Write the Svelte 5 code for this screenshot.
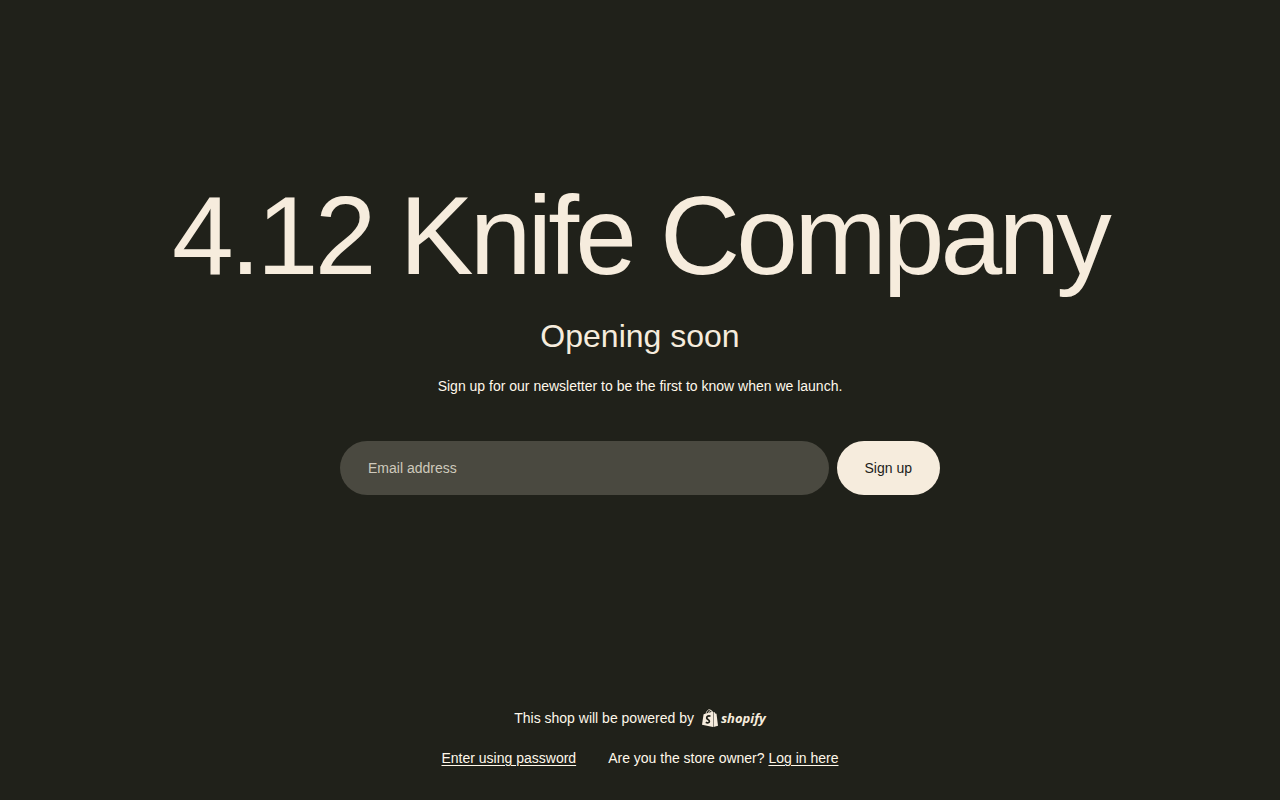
<script>
  let email = $state('');
</script>

<div class="page">
  <main>
    <h1>4.12 Knife Company</h1>
    <h2>Opening soon</h2>
    <p class="intro">Sign up for our newsletter to be the first to know when we launch.</p>
    <form onsubmit={(event) => event.preventDefault()}>
      <input type="email" aria-label="Email address" placeholder="Email address" bind:value={email} />
      <button type="submit">Sign up</button>
    </form>
  </main>

  <footer>
    <p class="powered">
      This shop will be powered by
      <a href="#shopify" class="brand" aria-label="Shopify">
        <svg width="16" height="18" viewBox="0 0 16 18" aria-hidden="true">
          <path fill="#f6ecdd" d="M1.6 5.2 11 2.6V18L0 15.8Z" />
          <path fill="#f6ecdd" d="m11.5 3 1.2.2.5 1.4 1.3.2L16 16.8 11.5 18Z" />
          <path fill="none" stroke="#f6ecdd" stroke-width=".8" d="M4 5C4.5 2.2 6 .6 7.3.6c1.3 0 2 1.2 2.2 3M6.4 4.5C6.7 2.6 7.7 1.4 8.8 1.4c.8 0 1.3.6 1.5 1.6" />
          <path fill="none" stroke="#20211a" stroke-width="1.7" d="M8.5 7.2C6.7 6.5 4.7 7.2 4.7 8.9c0 1.6 2.7 1.6 2.7 3.4 0 1.6-1.8 2.1-3.6.9" />
        </svg>
        <span>shopify</span>
      </a>
    </p>
    <div class="links">
      <a href="#password">Enter using password</a>
      <span>Are you the store owner? <a href="#login">Log in here</a></span>
    </div>
  </footer>
</div>

<style>
  :global(body) {
    background: #20211a;
  }

  .page {
    box-sizing: border-box;
    min-height: 100vh;
    display: flex;
    flex-direction: column;
    color: #fff8ea;
    font: 14px/20px "Liberation Sans", Arial, sans-serif;
    text-align: center;
  }

  main {
    flex: 1;
    display: flex;
    flex-direction: column;
    align-items: center;
    justify-content: center;
    padding: 0 16px 34px;
  }

  h1, h2, p {
    margin: 0;
    font-weight: 400;
  }

  h1 {
    color: #f6ecdd;
    font-size: 111px;
    line-height: 112px;
    letter-spacing: -0.035em;
  }

  h2 {
    margin-top: 24px;
    color: #f6ecdd;
    font-size: 32px;
    line-height: 40px;
  }

  .intro {
    margin-top: 20px;
  }

  form {
    box-sizing: border-box;
    width: 100%;
    max-width: 600px;
    margin-top: 45px;
    display: flex;
    gap: 8px;
  }

  input, button {
    box-sizing: border-box;
    height: 54px;
    border: 0;
    border-radius: 27px;
    padding: 0 28px;
    font: inherit;
  }

  input {
    flex: 1;
    min-width: 0;
    background: #4a4940;
    color: #f6ecdd;
  }

  input::placeholder {
    color: #cfc9bc;
    opacity: 1;
  }

  button {
    background: #f6ecdd;
    color: #20211a;
  }

  footer {
    display: flex;
    flex-direction: column;
    align-items: center;
    gap: 20px;
    padding: 0 16px 32px;
  }

  .powered, .brand, .links {
    display: flex;
    align-items: center;
  }

  .powered {
    gap: 8px;
  }

  .brand {
    gap: 3px;
    color: #f6ecdd;
    font: italic 700 13px/18px "Open Sans", sans-serif;
    text-decoration: none;
  }

  .links {
    gap: 32px;
  }

  .links a {
    color: inherit;
    text-underline-offset: 2px;
  }
</style>
